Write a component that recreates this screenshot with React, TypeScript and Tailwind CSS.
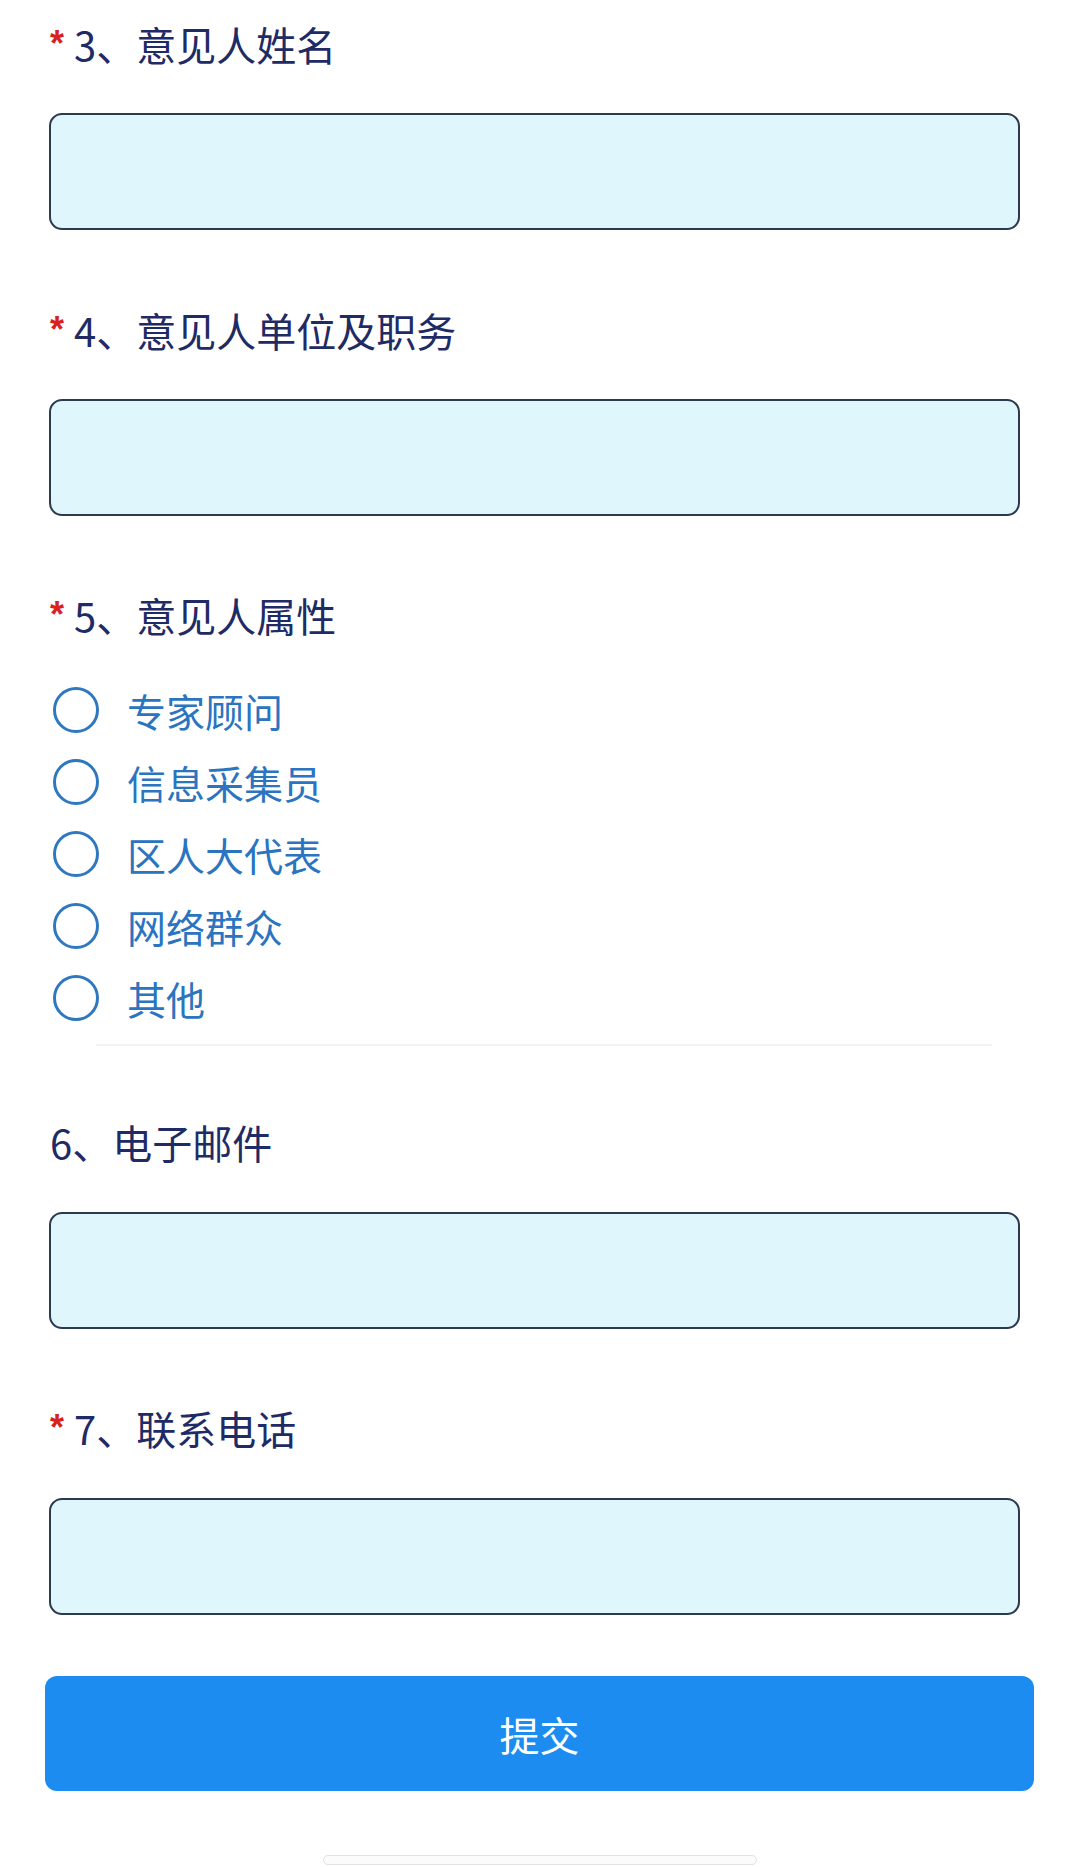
import React, { useState } from "react";

const FONT = { fontFamily: '"Noto Sans CJK SC", "Noto Sans", sans-serif' };

const OPTIONS = ["专家顾问", "信息采集员", "区人大代表", "网络群众", "其他"];

function Title({ text, required }: { text: string; required?: boolean }) {
  return (
    <div className="flex items-start h-[56px] pl-[50px]">
      {required && (
        <span
          className="text-[#d8221f] text-[36px] leading-none mt-[10px] w-[24px] font-bold"
          style={{ fontFamily: '"Liberation Sans", sans-serif' }}
        >
          *
        </span>
      )}
      <span className="text-[40px] leading-[56px] text-[#1f2b64]">{text}</span>
    </div>
  );
}

function Field() {
  return (
    <input
      type="text"
      className="block ml-[49px] w-[971px] h-[117px] bg-[#e0f6fd] border-2 border-[#2b3a4f] rounded-[13px] px-4 text-[34px] outline-none"
    />
  );
}

export default function App() {
  const [picked, setPicked] = useState<string | null>(null);

  return (
    <div className="w-[1080px] min-h-[1867px] bg-white flex flex-col" style={FONT}>
      {/* 3 */}
      <div className="pt-[16px]">
        <Title text="3、意见人姓名" required />
      </div>
      <div className="mt-[41px]">
        <Field />
      </div>

      {/* 4 */}
      <div className="mt-[72px]">
        <Title text="4、意见人单位及职务" required />
      </div>
      <div className="mt-[41px]">
        <Field />
      </div>

      {/* 5 */}
      <div className="mt-[71px]">
        <Title text="5、意见人属性" required />
      </div>
      <div className="mt-[31px] flex flex-col">
        {OPTIONS.map((opt) => (
          <label key={opt} className="flex items-center h-[72px] pl-[53px] cursor-pointer">
            <span
              onClick={() => setPicked(opt)}
              className="w-[46px] h-[46px] rounded-full border-[3px] border-[#2f78bf] flex items-center justify-center"
            >
              {picked === opt && <span className="w-[24px] h-[24px] rounded-full bg-[#2f78bf]" />}
            </span>
            <span className="ml-[28px] text-[39px] text-[#2a74c0] leading-none">{opt}</span>
          </label>
        ))}
      </div>
      <div className="mt-[10px] ml-[96px] w-[896px] h-[2px] bg-[#f3f3f3]" />

      {/* 6 */}
      <div className="mt-[68px]">
        <Title text="6、电子邮件" />
      </div>
      <div className="mt-[42px]">
        <Field />
      </div>

      {/* 7 */}
      <div className="mt-[71px]">
        <Title text="7、联系电话" required />
      </div>
      <div className="mt-[42px]">
        <Field />
      </div>

      <button className="mt-[61px] ml-[45px] w-[989px] h-[115px] rounded-[12px] bg-[#1d8cf1] text-white text-[40px]">
        提交
      </button>

      <div className="mt-auto pt-[63px] flex justify-center">
        <div className="w-[434px] h-[10px] rounded-full bg-[#fbfbfb] border border-[#e2e2e2] mb-[2px]" />
      </div>
    </div>
  );
}
